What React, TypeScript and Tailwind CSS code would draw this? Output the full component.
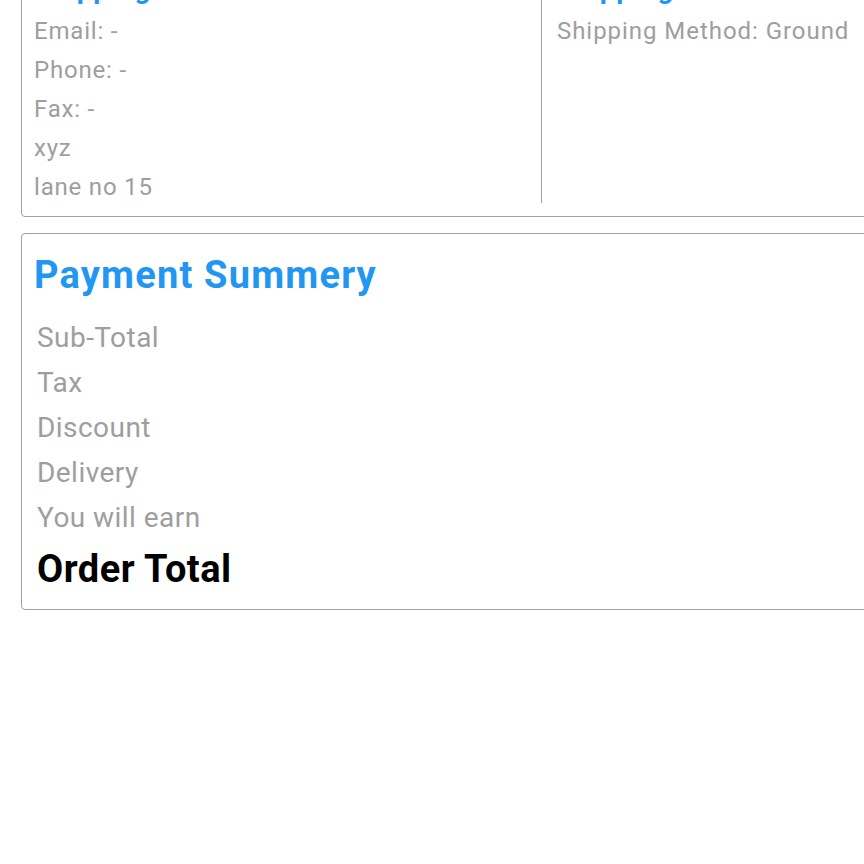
export default function App() {
  const font = { fontFamily: 'Roboto, "Noto Sans", sans-serif' };
  return (
    <div className="w-[864px] h-[864px] overflow-hidden bg-white" style={font}>
      <div className="-mt-[40px] pl-[21px]">
        <div className="w-[900px] border border-[#a0a0a0] rounded-[4px] pt-[11px] pb-[9px]">
          <div className="flex">
            <div className="w-[519px] pl-[12px]">
              <div className="text-[28px] leading-[34px] font-bold text-[#2196f3] tracking-[0.8px] mb-[6px]">Shipping Address</div>
              <div className="text-[24px] leading-[39px] text-[#9e9e9e] tracking-[0.8px]">
                <div>Email: -</div>
                <div>Phone: -</div>
                <div>Fax: -</div>
                <div>xyz</div>
                <div>lane no 15</div>
              </div>
            </div>
            <div className="w-px bg-[#a0a0a0] self-start h-[231px]" />
            <div className="pl-[15px]">
              <div className="text-[28px] leading-[34px] font-bold text-[#2196f3] tracking-[0.8px] mb-[6px]">Shipping</div>
              <div className="text-[24px] leading-[39px] text-[#9e9e9e] tracking-[0.95px]">Shipping Method: Ground</div>
            </div>
          </div>
        </div>
        <div className="w-[900px] mt-[16px] border border-[#a0a0a0] rounded-[4px] pt-[18px] pb-[17px] pl-[12px]">
          <div className="text-[38px] leading-[46px] font-bold text-[#2196f3] tracking-[1.2px]">Payment Summery</div>
          <div className="mt-[17px] pl-[3px] text-[28px] leading-[45px] text-[#9e9e9e] tracking-[0.45px]">
            <div>Sub-Total</div>
            <div>Tax</div>
            <div>Discount</div>
            <div>Delivery</div>
            <div>You will earn</div>
          </div>
          <div className="mt-[6px] pl-[3px] text-[38px] leading-[46px] font-bold text-black tracking-[0.5px]">Order Total</div>
        </div>
      </div>
    </div>
  );
}
